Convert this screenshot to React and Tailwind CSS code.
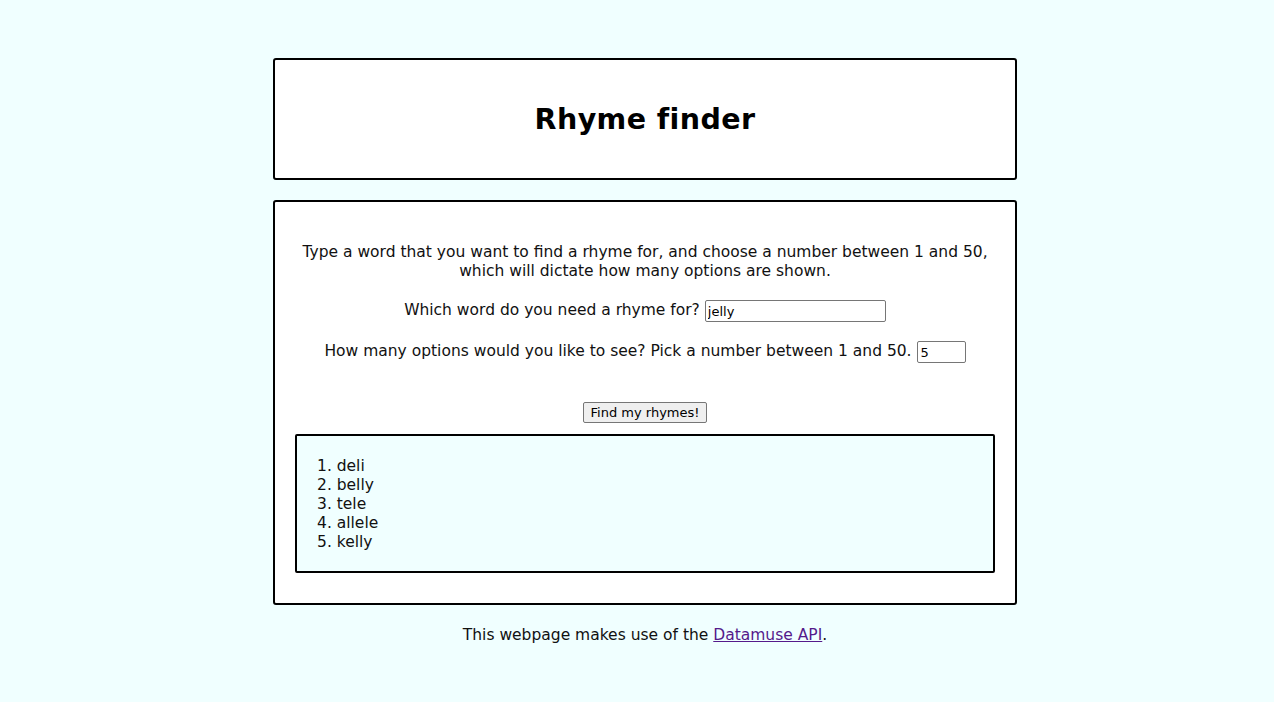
import React, { useState } from 'react';

const font = { fontFamily: '"DejaVu Sans", Verdana, sans-serif' };

const App = () => {
  const [word, setWord] = useState('jelly');
  const [count, setCount] = useState('5');
  const rhymes = ['deli', 'belly', 'tele', 'allele', 'kelly'];

  return (
    <div className="min-h-[702px] bg-[#f0ffff] text-[#111] pt-[58px]" style={font}>
      <div className="ml-[273px] w-[744px]">
        <div className="h-[122px] bg-white border-2 border-black rounded-[3px] flex items-center justify-center">
          <h1 className="text-[28.5px] font-bold text-black tracking-[0.4px] mt-[2px]">Rhyme finder</h1>
        </div>

        <div className="mt-[20px] bg-white border-2 border-black rounded-[3px] pt-[41px] px-[20px] pb-[30px] text-center text-[15.5px] leading-[19px]">
          <p>
            Type a word that you want to find a rhyme for, and choose a number between 1 and 50,
            <br />
            which will dictate how many options are shown.
          </p>

          <div className="mt-[17px] flex items-center justify-center gap-[5px]">
            <span>Which word do you need a rhyme for?</span>
            <input
              type="text"
              value={word}
              onChange={(e) => setWord(e.target.value)}
              className="w-[181px] h-[22px] border border-[#767676] rounded-[2px] bg-white px-[2px] text-[13px] text-black mt-[2px]"
            />
          </div>

          <div className="mt-[17px] flex items-center justify-center gap-[5px]">
            <span>How many options would you like to see? Pick a number between 1 and 50.</span>
            <input
              type="text"
              value={count}
              onChange={(e) => setCount(e.target.value)}
              className="w-[49px] h-[22px] border border-[#767676] rounded-[2px] bg-white px-[3px] text-[13px] text-black mt-[2px]"
            />
          </div>

          <div className="mt-[39px] flex justify-center">
            <button className="h-[21px] w-[124px] border border-[#767676] rounded-[2px] bg-[#efefef] text-[13px] text-black leading-none">
              Find my rhymes!
            </button>
          </div>

          <div className="mt-[11px] border-2 border-black rounded-[2px] bg-[#f0ffff] text-left pt-[21px] pb-[19px] pl-[20px]">
            <ol className="list-none">
              {rhymes.map((r, i) => (
                <li key={r}>{i + 1}. {r}</li>
              ))}
            </ol>
          </div>
        </div>

        <p className="mt-[19px] text-center text-[15.5px]">
          This webpage makes use of the{' '}
          <a href="#" className="underline text-[#551a8b]">Datamuse API</a>.
        </p>
      </div>
    </div>
  );
};

export default App;
